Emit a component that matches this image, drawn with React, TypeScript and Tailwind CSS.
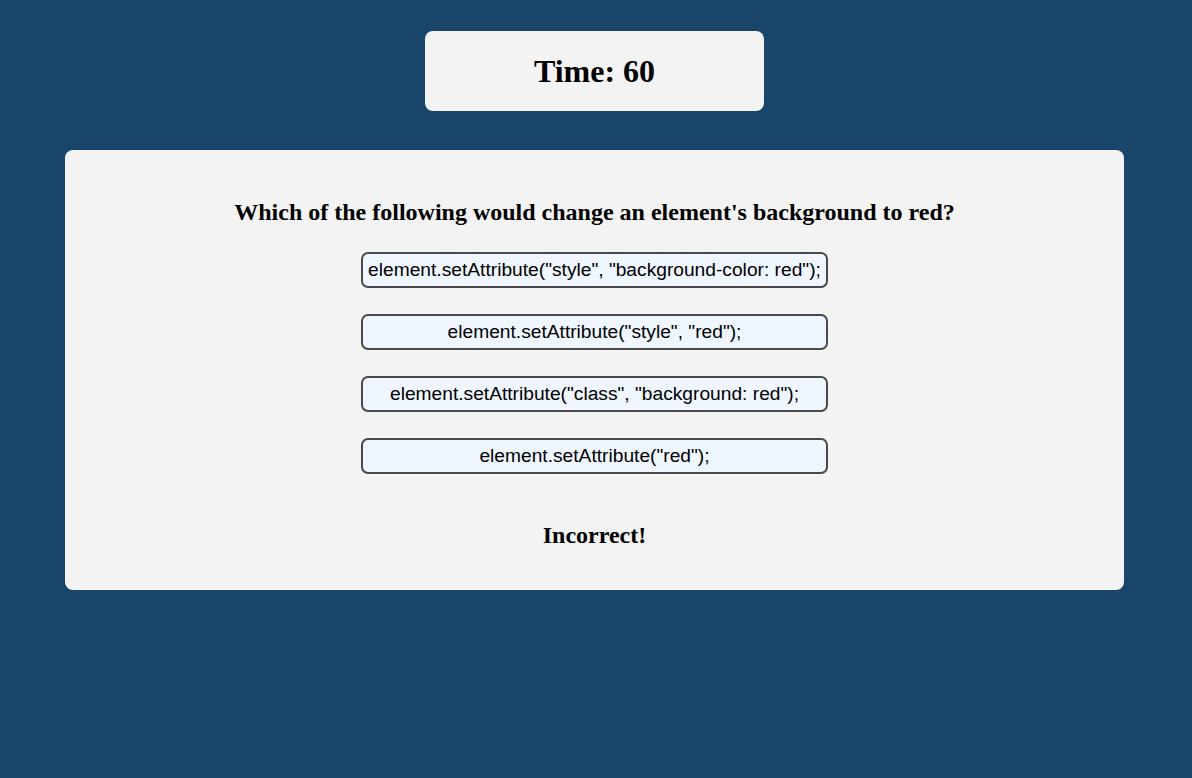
import React from 'react';

const options = [
    'element.setAttribute("style", "background-color: red");',
    'element.setAttribute("style", "red");',
    'element.setAttribute("class", "background: red");',
    'element.setAttribute("red");',
];

const App = () => {
    return (
        <div className="min-h-screen w-full bg-[#19456b] pt-[31px] pr-[3px] font-['Liberation_Serif',serif]">
            <div className="mx-auto flex h-[80px] w-[339px] items-center justify-center rounded-[8px] bg-[#f3f3f3]">
                <h1 className="text-[32px] font-bold leading-none text-black">Time: 60</h1>
            </div>
            <div className="mx-[65px] mt-[39px] flex h-[440px] flex-col items-center rounded-[8px] bg-[#f3f3f3] pt-[48px]">
                <h2 className="text-[24px] font-bold leading-[28px] text-black">
                    Which of the following would change an element's background to red?
                </h2>
                <div className="mt-[26px] flex flex-col gap-[26px]">
                    {options.map((opt) => (
                        <button
                            key={opt}
                            type="button"
                            className="flex h-[36px] items-center justify-center rounded-[7px] border-2 border-[#4a4a4a] bg-[#eff6ff] px-[5px] font-['Liberation_Sans',sans-serif] text-[19.2px] text-black"
                        >
                            {opt}
                        </button>
                    ))}
                </div>
                <p className="mt-[47px] text-[24px] font-bold leading-[28px] text-black">Incorrect!</p>
            </div>
        </div>
    );
};

export default App;
